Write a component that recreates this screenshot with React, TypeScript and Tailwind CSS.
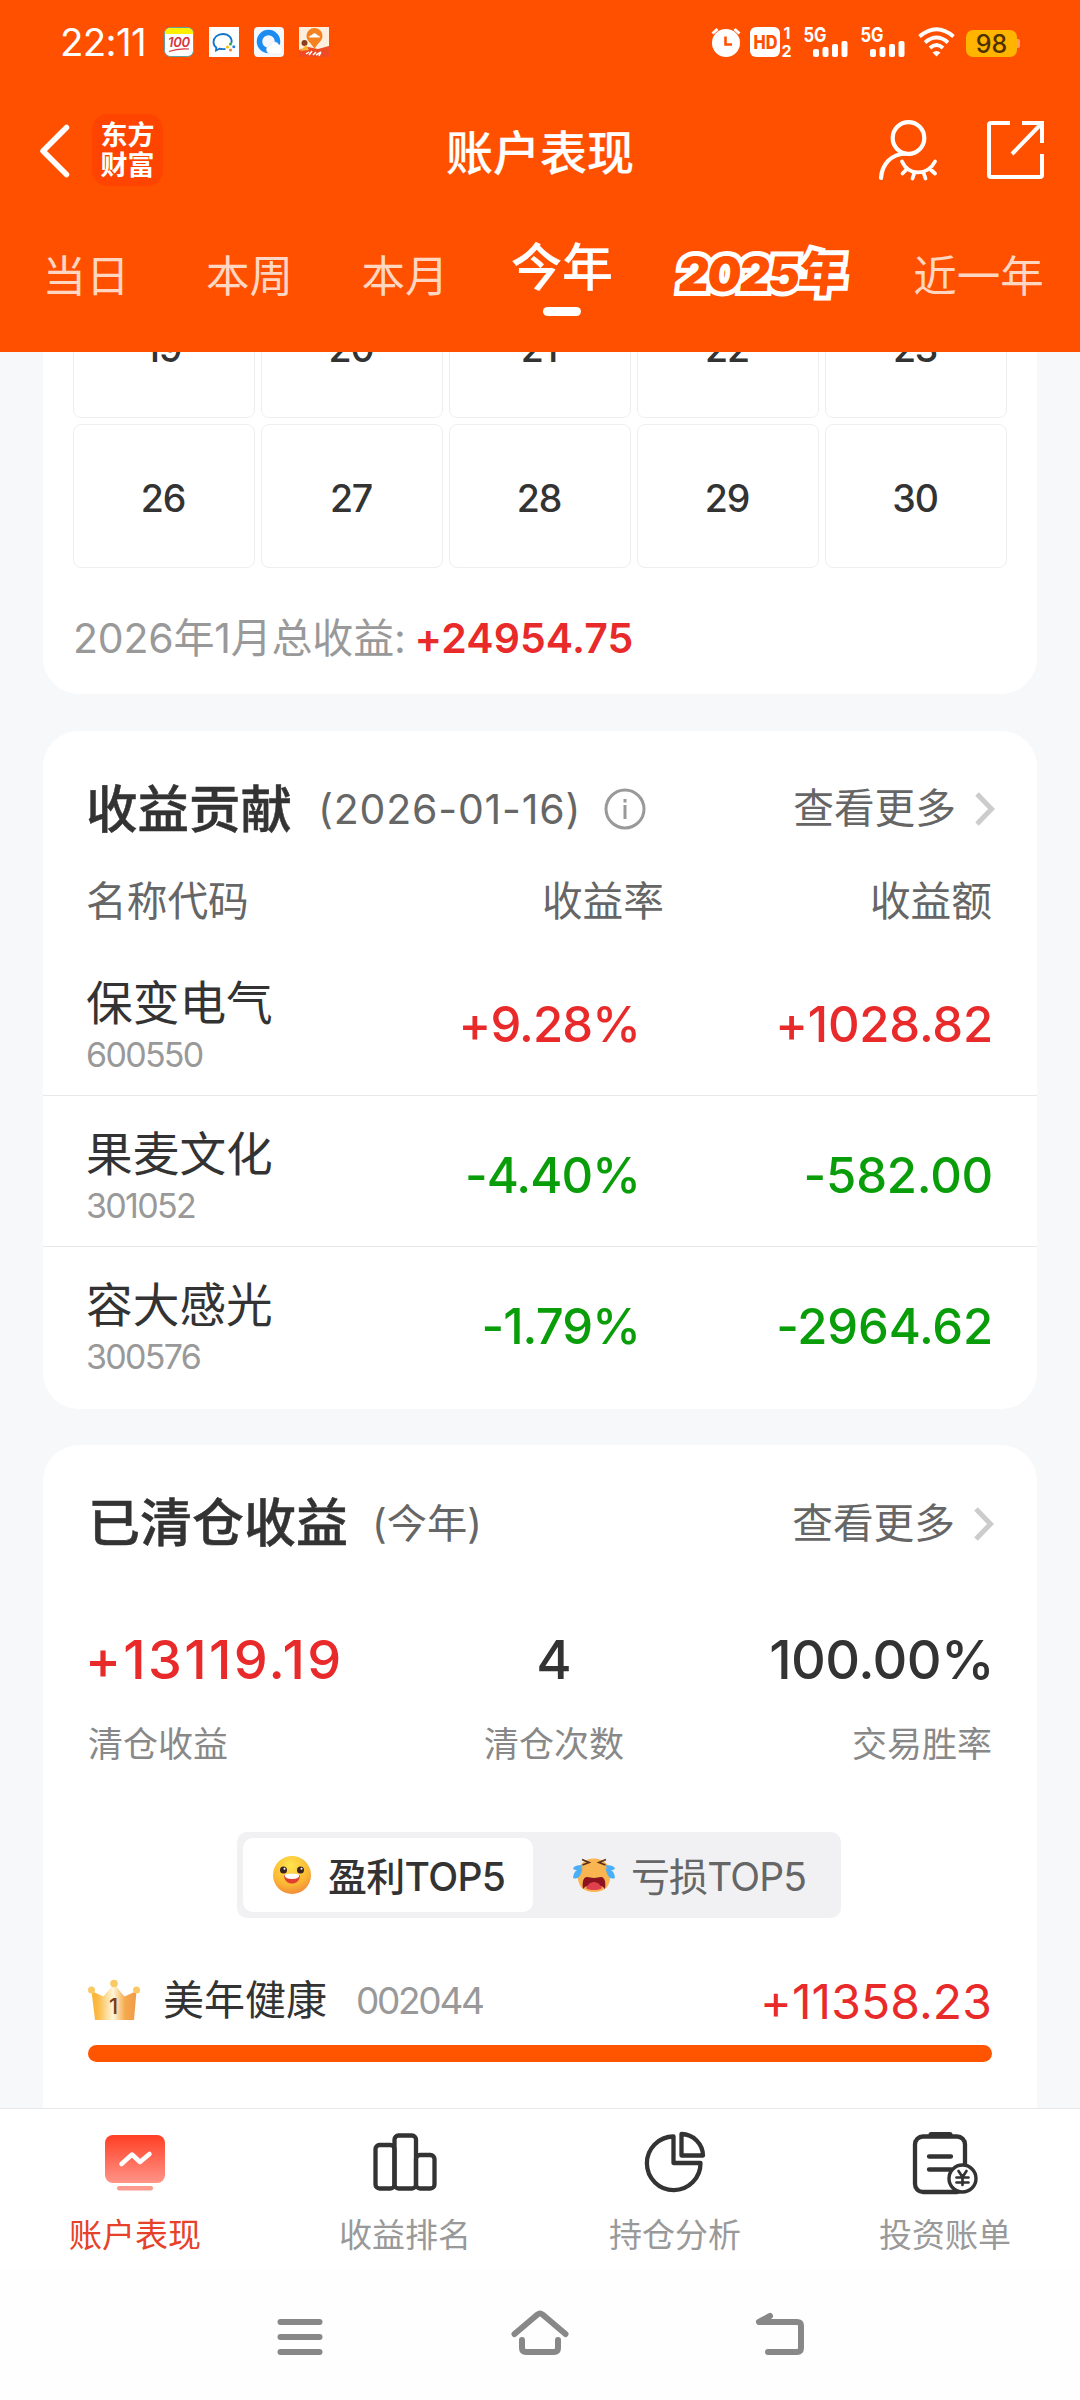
import React from 'react';
import clsx from 'clsx';

interface Contribution {
  name: string;
  code: string;
  rate: string;
  amount: string;
  up: boolean;
}

const contributions: Contribution[] = [
  { name: '保变电气', code: '600550', rate: '+9.28%', amount: '+1028.82', up: true },
  { name: '果麦文化', code: '301052', rate: '-4.40%', amount: '-582.00', up: false },
  { name: '容大感光', code: '300576', rate: '-1.79%', amount: '-2964.62', up: false },
];

const weeks = [
  ['19', '20', '21', '22', '23'],
  ['26', '27', '28', '29', '30'],
];

const Signal = () => (
  <svg className="overflow-visible" width="45" height="30" viewBox="0 0 45 30" fill="#fff">
    <text x="-0.500" y="15" fontSize="20" fontWeight="700" fontFamily="Inter" textLength="23" lengthAdjust="spacingAndGlyphs">5G</text>
    <rect x="9" y="22" width="6" height="8" rx="2" />
    <rect x="18.500" y="20" width="6" height="10" rx="2" />
    <rect x="28" y="17" width="6" height="13" rx="2" />
    <rect x="37.500" y="14" width="6" height="16" rx="2" />
  </svg>
);

const StatusBar = () => (
  <div className="flex h-[84px] items-center pl-[60px] pr-[60px] text-white">
    <span className="w-[104px] text-[38.500px] leading-[40px] tracking-[-0.700px]">22:11</span>
    <div className="flex gap-[15px]">
      <svg width="30" height="30" viewBox="0 0 30 30">
        <rect x="0.500" y="0.500" width="29" height="29" rx="6" fill="#fff" stroke="#5f9f9f" />
        <path d="M1 7V6a5 5 0 0 1 5-5h18a5 5 0 0 1 5 5v1z" fill="#fff000" />
        <text x="4" y="20" fontSize="13" fontStyle="italic" fontWeight="600" fontFamily="Inter" fill="#d8323c" textLength="22">100</text>
        <path d="M5 24.500Q14 21 25 22" stroke="#d8323c" strokeWidth="1.200" fill="none" />
      </svg>
      <svg width="30" height="30" viewBox="0 0 30 30">
        <rect width="30" height="30" fill="#fff" />
        <path d="M22.500 16c1-5-3-9-8.500-9s-9.500 3.500-9.500 8c0 2.500 1.200 4.300 2.800 5.500L7 23.500l3.500-1.800c1.500.5 4 .6 6 .1" stroke="#1473c8" strokeWidth="1.800" fill="none" />
        <circle cx="21.500" cy="17" r="1.500" fill="#2aab4f" />
        <circle cx="24.800" cy="19.800" r="1.500" fill="#2a7de0" />
        <circle cx="21.500" cy="23" r="1.500" fill="#f0803c" />
        <circle cx="18.500" cy="20" r="1.500" fill="#f5c400" />
      </svg>
      <svg width="30" height="30" viewBox="0 0 30 30">
        <rect width="30" height="30" rx="4" fill="#f4f7fc" />
        <circle cx="14.500" cy="14.500" r="9" fill="none" stroke="#1c8cf0" strokeWidth="5.500" />
        <path d="M17 27a4.500 4.500 0 0 1 0-9c1-4 6.500-4 7.500-.5 5 .5 5 9.500 0 9.500z" fill="#fff" stroke="#dde5ee" strokeWidth="0.500" />
      </svg>
      <svg width="30" height="30" viewBox="0 0 30 30">
        <rect width="30" height="30" fill="#fdeedd" />
        <path d="M0 23l9-3 10 2 11-3v11H0z" fill="#ee4a24" />
        <path d="M15.500 1a8 8 0 0 1 8 8c0 5-5 7-8 13-3-6-8-8-8-13a8 8 0 0 1 8-8z" fill="#f58220" />
        <path d="M10 10.500q0-2 2.500-2.200 3-4 6 0 2.500.2 2.500 2.200z" fill="#fff" />
        <circle cx="5.500" cy="16" r="3" fill="#8a3f1a" />
        <path d="M1 24l6-6 3 5z" fill="#ffb02e" />
        <path d="M7 27l3-2m0 3l3-4m1 4l3-3m0 3l5-3m-2 4l2-4" stroke="#fff" strokeWidth="1.500" />
      </svg>
    </div>
    <div className="ml-auto flex h-[30px] items-end">
      <svg width="30" height="30" viewBox="0 0 30 30">
        <circle cx="15" cy="16" r="14" fill="#fff" />
        <path d="M1.500 6.500L6.500 2M28.500 6.500l-5-4.500" stroke="#fff" strokeWidth="3" />
        <path d="M14.500 9.500v8h6.500" stroke="#ff5000" strokeWidth="2.600" fill="none" />
      </svg>
      <svg className="ml-[9px] overflow-visible" width="43" height="30" viewBox="0 0 43 30" fill="#fff">
        <rect width="30" height="30" rx="6" />
        <text x="3.500" y="22" fontSize="19" fontWeight="800" fontFamily="Inter" fill="#ff5000" textLength="24" lengthAdjust="spacingAndGlyphs">HD</text>
        <text x="33.500" y="12" fontSize="16" fontWeight="700" fontFamily="Inter">1</text>
        <text x="31.500" y="29.500" fontSize="16" fontWeight="700" fontFamily="Inter">2</text>
      </svg>
      <div className="ml-[11px]"><Signal /></div>
      <div className="ml-[12px]"><Signal /></div>
      <svg className="ml-[12px]" width="37" height="30" viewBox="0 0 37 30" fill="none" stroke="#fff" strokeWidth="3.800">
        <path d="M1.500 9.500q17-14.500 34 0" />
        <path d="M7 15.500q11.500-10 23 0" />
        <path d="M12 21q6.500-6 13 0" />
        <path d="M18.500 29.500l-4-4q4-3 8 0z" fill="#fff" stroke="none" />
      </svg>
      <div className="ml-[11px] flex items-center">
        <div className="h-[27px] w-[51px] rounded-[7px] bg-[#ffb400] text-center text-[25px] font-medium leading-[28px] text-[#4d3000]">98</div>
        <div className="h-[9px] w-[3px] rounded-r-[2px] bg-[#ff9a66]" />
      </div>
    </div>
  </div>
);

const TitleBar = () => (
  <div className="flex h-[132px] items-center pl-[39px] pr-[36px]">
    <svg className="mt-[2px]" width="31" height="54" viewBox="0 0 31 54" fill="none" stroke="#fff" strokeWidth="5.500" strokeLinecap="round" strokeLinejoin="round">
      <path d="M27.500 3.500L4 27l23.500 23.500" />
    </svg>
    <div className="ml-[22px] flex h-[72px] w-[71px] flex-col items-center justify-center rounded-[15px] bg-[#ff4400] pt-[2px] text-[27px] font-bold leading-[30px] text-white">
      <span>东方</span>
      <span>财富</span>
    </div>
    <h1 className="mt-[6px] flex-1 pl-[123px] text-center text-[47px] font-medium leading-[60px] text-white [-webkit-text-stroke:0.2px_white]">账户表现</h1>
    <svg className="ml-[83px] shrink-0" width="62" height="64" viewBox="0 0 62 64" fill="none" stroke="#fff" strokeWidth="4.200" strokeLinecap="round">
      <circle cx="31.500" cy="20" r="15.800" />
      <path d="M4 60C5 46 14 36.500 28 35.500" />
      <path d="M25 43.500c6.500 14.500 25.500 14.500 33 0M30 51l-4.500 4.500M37.500 54.500l-2 6M46.500 54.500l2 6M53 51l5 4.500" strokeWidth="3.800" />
    </svg>
    <svg className="ml-[47px] shrink-0" width="58" height="60" viewBox="0 0 58 60" fill="none" stroke="#fff" strokeWidth="4">
      <path d="M24 3H5Q3 3 3 5v50q0 2 2 2h49q2 0 2-2V34" />
      <path d="M36 3h20v20M56 3L26 34" />
    </svg>
  </div>
);

const PeriodTabs = () => (
  <div className="flex h-[136px] pt-[30px] text-[43.500px] leading-[60px] text-[#ffd6c2]">
    <span className="w-[172px] shrink-0 text-center">当日</span>
    <span className="w-[155px] shrink-0 text-center">本周</span>
    <span className="w-[156px] shrink-0 text-center">本月</span>
    <div className="-mt-[8px] flex w-[158px] shrink-0 flex-col items-center">
      <span className="text-[51px] font-medium text-white [-webkit-text-stroke:0.2px_white]">今年</span>
      <span className="mt-[9px] h-[9px] w-[38px] rounded-full bg-white" />
    </div>
    <div className="-mt-[2px] w-[236px] shrink-0 -skew-x-6 text-center text-[47.500px] font-black tracking-[-1.800px] text-[#ff5000] [-webkit-text-stroke:10px_white] [paint-order:stroke_fill]">2025年</div>
    <span className="w-[203px] shrink-0 text-center">近一年</span>
  </div>
);

const MoreLink = () => (
  <a className="ml-auto flex items-center text-[40.700px] leading-[50px] text-[#666]">
    查看更多
    <svg className="ml-[18px]" width="22" height="34" viewBox="0 0 22 34" fill="none" stroke="#ccc" strokeWidth="5">
      <path d="M3 2l14.500 15L3 32" />
    </svg>
  </a>
);

const CalendarCard = () => (
  <section className="h-[342px] overflow-hidden rounded-b-[36px] bg-white px-[30px]">
    <div className="-mt-[78px] flex flex-col gap-[6px]">
      {weeks.map((week) => (
        <div key={week[0]} className="grid grid-cols-5 gap-[6px]">
          {week.map((day) => (
            <div key={day} className="flex h-[144px] items-center justify-center rounded-[8px] border border-[#eee] pr-[2px] pt-[6px] text-[37.500px] font-medium leading-[40px] tracking-[-1.200px] text-[#333]">
              {day}
            </div>
          ))}
        </div>
      ))}
    </div>
    <p className="mt-[43px] flex items-center text-[41px] leading-[54px] text-[#999]">
      <span className="tracking-[-0.200px]">2026年1月总收益:</span>
      <span className="ml-[9px] font-semibold tracking-[0.100px] text-[#e82a2a]">+24954.75</span>
    </p>
  </section>
);

const ContributionCard = () => (
  <section className="mt-[37px] h-[678px] rounded-[36px] bg-white">
    <div className="flex h-[156px] items-center pl-[43px] pr-[41px]">
      <h2 className="text-[51.500px] font-medium leading-[60px] text-[#333] [-webkit-text-stroke:0.5px_#333]">收益贡献</h2>
      <span className="ml-[26px] text-[41px] leading-[50px] tracking-[0.800px] text-[#666]">(2026-01-16)</span>
      <svg className="ml-[23px]" width="42" height="42" viewBox="0 0 42 42" fill="none" stroke="#999" strokeWidth="3">
        <circle cx="21" cy="21" r="19" />
        <path d="M21 17v14M21 11v3.500" />
      </svg>
      <MoreLink />
    </div>
    <div className="-mt-[15px] flex h-[60px] items-center pl-[43px] pr-[45px] text-[40.700px] leading-[50px] text-[#666]">
      <span className="w-[300px]">名称代码</span>
      <span className="w-[278px] text-right">收益率</span>
      <span className="flex-1 text-right">收益额</span>
    </div>
    <div className="mt-[13px]">
      {contributions.map((item, i) => (
        <div key={item.code} className={clsx('flex h-[151px] items-center pl-[43px] pr-[44px]', i < 2 && 'border-b border-[#e8e8e8]')}>
          <div className="w-[250px] pt-[9px]">
            <p className="text-[46.700px] leading-[60px] text-[#333]">{item.name}</p>
            <p className="text-[34px] leading-[44px] tracking-[-1.700px] text-[#999]">{item.code}</p>
          </div>
          <div className={clsx('flex flex-1 pt-[9px] text-[49px] font-medium leading-[60px]', item.up ? 'text-[#e82a2a]' : 'text-[#0a9d0a]')}>
            <span className="w-[304px] text-right tracking-[-0.900px]">{item.rate}</span>
            <span className="flex-1 text-right tracking-[-0.200px]">{item.amount}</span>
          </div>
        </div>
      ))}
    </div>
  </section>
);

const HappyFace = () => (
  <svg width="40" height="40" viewBox="0 0 40 40">
    <defs>
      <radialGradient id="happy" cx="0.450" cy="0.250" r="0.850">
        <stop offset="0" stopColor="#ffe44d" />
        <stop offset="0.600" stopColor="#fbb733" />
        <stop offset="1" stopColor="#ee7a3c" />
      </radialGradient>
    </defs>
    <circle cx="20" cy="20" r="19" fill="url(#happy)" />
    <circle cx="11.500" cy="15" r="3.500" fill="#3a2420" />
    <circle cx="28.500" cy="15" r="3.500" fill="#3a2420" />
    <circle cx="12.500" cy="13.800" r="1" fill="#fff" />
    <circle cx="29.500" cy="13.800" r="1" fill="#fff" />
    <path d="M12 20q8.500-2.500 16 0c0 6-4 8.500-8 8.500s-8-2.500-8-8.500z" fill="#e2402f" />
    <path d="M12.500 19.500q7.500-2 15 0 0 4.500-7.500 4.500t-7.500-4.500z" fill="#fff" />
  </svg>
);

const CryFace = () => (
  <svg width="44" height="36" viewBox="0 0 44 36">
    <path d="M22 1.500c9.500 0 16.500 6.500 16.500 16 0 6-2 11-4.500 13.500-3 2.500-7 4-12 4s-9-1.500-12-4c-2.500-2.500-4.500-7.500-4.500-13.500 0-9.500 7-16 16.500-16z" fill="#f8b550" />
    <path d="M11 32c-1-6 0-12 4-12 3 0 4 1 7 1s4-1 7-1c4 0 5 6 4 12q-2-3-5-3H16q-3 0-5 3z" fill="#8c1420" />
    <path d="M14 31q3-6 8-6t8 6q-2 2-8 2t-8-2z" fill="#e0404e" />
    <path d="M10 2.500l7 3-6.500 2.500M34 2.500l-7 3 6.500 2.500" stroke="#5e3020" strokeWidth="1.800" fill="none" />
    <path d="M11 8.500q-9-1-10 3.500 5 3 10-3.500zM10.500 11q-9 1-9.500 10 7 3 9.500-10zM33 8.500q9-1 10 3.500-5 3-10-3.500zM33.500 11q9 1 9.500 10-7 3-9.500-10z" fill="#4aaef7" />
  </svg>
);

const Crown = () => (
  <svg width="52" height="42" viewBox="0 0 52 42">
    <defs>
      <linearGradient id="crown">
        <stop offset="0" stopColor="#f9b233" />
        <stop offset="0.150" stopColor="#fbbb48" />
        <stop offset="0.480" stopColor="#fff6d8" />
        <stop offset="0.750" stopColor="#f5a94c" />
        <stop offset="1" stopColor="#f19a4a" />
      </linearGradient>
    </defs>
    <path d="M3.500 12l12 5.500L26 5l10.500 12.500 12-5.500L46 41H7z" fill="url(#crown)" />
    <circle cx="3.500" cy="11" r="3.500" fill="#fbc964" />
    <circle cx="26" cy="4.500" r="3.800" fill="#fbc964" />
    <circle cx="48.500" cy="11" r="3.500" fill="#fbc964" />
    <text x="25.500" y="34.500" fontSize="22" fontWeight="500" fontFamily="Inter" fill="#7a3b1c" textAnchor="middle">1</text>
  </svg>
);

const ClearedCard = () => (
  <section className="mt-[36px] h-[663px] overflow-hidden rounded-t-[36px] bg-white pl-[45px] pr-[45px]">
    <div className="-mr-[3px] flex h-[156px] items-center pt-[1px]">
      <h2 className="text-[52px] font-medium leading-[60px] text-[#333] [-webkit-text-stroke:0.5px_#333]">已清仓收益</h2>
      <span className="ml-[24px] text-[40.300px] leading-[50px] text-[#666]">(今年)</span>
      <MoreLink />
    </div>
    <div className="mt-[26px] flex justify-between">
      <div className="w-[320px]">
        <p className="-ml-[3px] text-[54px] font-medium leading-[66px] tracking-[2.300px] text-[#e82a2a]">+13119.19</p>
        <p className="mt-[25px] text-[35px] leading-[52px] text-[#888]">清仓收益</p>
      </div>
      <div className="w-[290px] pl-[2px] text-center">
        <p className="text-[54px] font-medium leading-[66px] text-[#333]">4</p>
        <p className="mt-[25px] text-[35px] leading-[52px] text-[#888]">清仓次数</p>
      </div>
      <div className="w-[294px] text-right">
        <p className="-mr-[2px] text-[54px] font-medium leading-[66px] tracking-[-0.600px] text-[#333]">100.00%</p>
        <p className="mt-[25px] text-[35px] leading-[52px] text-[#888]">交易胜率</p>
      </div>
    </div>
    <div className="ml-[149px] mt-[62px] flex h-[86px] w-[604px] items-center rounded-[10px] bg-[#f1f1f4] p-[6px] text-[39px] leading-[50px]">
      <div className="flex h-[74px] w-[290px] items-center rounded-[10px] bg-white pl-[29px] text-[#333]">
        <HappyFace />
        <span className="ml-[16px] pt-[3px] font-medium tracking-[-0.700px]">盈利TOP5</span>
      </div>
      <div className="flex flex-1 items-center pl-[39px] text-[#666]">
        <CryFace />
        <span className="ml-[15px] pt-[3px] tracking-[-0.900px]">亏损TOP5</span>
      </div>
    </div>
    <div className="mt-[52px] flex h-[60px] items-center">
      <Crown />
      <span className="ml-[23px] text-[41px] leading-[50px] text-[#333]">美年健康</span>
      <span className="ml-[29px] pt-[1px] text-[37px] leading-[50px] tracking-[-2.300px] text-[#999]">002044</span>
      <span className="ml-auto pt-[4px] text-[48px] leading-[56px] tracking-[0.100px] text-[#e82a2a]">+11358.23</span>
    </div>
    <div className="mt-[15px] h-[17px] rounded-full bg-[#ff5500]" />
  </section>
);

const navItems = [
  {
    label: '账户表现',
    icon: (
      <svg width="66" height="64" viewBox="0 0 66 64">
        <defs>
          <linearGradient id="screen" x2="0" y2="1">
            <stop offset="0" stopColor="#ff3f24" />
            <stop offset="1" stopColor="#ff9488" />
          </linearGradient>
        </defs>
        <rect x="3" y="4" width="60" height="48" rx="8" fill="url(#screen)" />
        <path d="M19.500 33l10.500-9.500 8 7.500L47.500 23" fill="none" stroke="#fff" strokeWidth="4.500" strokeLinecap="round" strokeLinejoin="round" />
        <rect x="15" y="55" width="36" height="4.500" rx="2.200" fill="#fb9a8e" />
      </svg>
    ),
  },
  {
    label: '收益排名',
    icon: (
      <svg width="66" height="64" viewBox="0 0 66 64" fill="none" stroke="#333" strokeWidth="4.300">
        <rect x="3.500" y="14" width="19" height="43.500" rx="4" />
        <rect x="22.500" y="4.500" width="21.500" height="53" rx="4" />
        <rect x="44" y="24" width="18.500" height="33.500" rx="4" />
      </svg>
    ),
  },
  {
    label: '持仓分析',
    icon: (
      <svg width="66" height="64" viewBox="0 0 66 64" fill="none" stroke="#333" strokeWidth="4.300" strokeLinejoin="round">
        <path d="M31.500 5.500A26.800 26.800 0 1 0 58.500 32H31.500z" />
        <path d="M39.500 3v21.500H61A22 22 0 0 0 39.500 3z" />
      </svg>
    ),
  },
  {
    label: '投资账单',
    icon: (
      <svg width="66" height="64" viewBox="0 0 66 64" fill="none" stroke="#333" strokeWidth="4.300" strokeLinecap="round">
        <rect x="3" y="5.500" width="50" height="55.500" rx="8" />
        <path d="M19 3.500h19" strokeWidth="5" />
        <path d="M17 25.500h22M17 38.500h22" />
        <circle cx="50.500" cy="47.500" r="13.500" fill="#fff" strokeWidth="3.400" />
        <path d="M46.500 40l4 6 4-6M50.500 46v8M44.500 46.500h12M44.500 51.500h12" strokeWidth="2.700" />
      </svg>
    ),
  },
];

const BottomNav = () => (
  <nav className="flex h-[162px] border-t border-[#e8e8e8] bg-white pt-[22px]">
    {navItems.map((item, i) => (
      <div key={item.label} className="flex w-[270px] flex-col items-center">
        {item.icon}
        <span className={clsx('mt-[18px] text-[33px] leading-[44px]', i === 0 ? 'text-[#e8412a]' : 'text-[#999]')}>{item.label}</span>
      </div>
    ))}
  </nav>
);

const SystemNav = () => (
  <div className="flex h-[130px] justify-center gap-[180px] bg-[#fefefe] pt-[38px]">
    <svg width="60" height="50" viewBox="0 0 60 50" stroke="#888" strokeWidth="6" strokeLinecap="round">
      <path d="M10.500 14h39M10.500 29h39M10.500 44h39" />
    </svg>
    <svg width="60" height="50" viewBox="0 0 60 50" fill="none" stroke="#888" strokeWidth="6" strokeLinecap="round" strokeLinejoin="round">
      <path d="M4.500 26L27.500 6.500Q30 4.500 32.500 6.500L55.500 26" />
      <path d="M12 32v8q0 4 4 4h28q4 0 4-4v-8" />
    </svg>
    <svg width="60" height="50" viewBox="0 0 60 50" fill="none" stroke="#888" strokeWidth="6" strokeLinecap="round" strokeLinejoin="round">
      <path d="M20 8L9 14h38q4 0 4 4v22q0 4-4 4H18" />
    </svg>
  </div>
);

const App: React.FC = () => {
  return (
    <div className="flex h-[2400px] w-[1080px] flex-col overflow-hidden whitespace-nowrap bg-[#f7f8fa] font-['Inter','Noto_Sans_CJK_SC',sans-serif]">
      <header className="h-[352px] shrink-0 bg-[#ff5000]">
        <StatusBar />
        <TitleBar />
        <PeriodTabs />
      </header>
      <main className="h-[1756px] overflow-hidden px-[43px]">
        <CalendarCard />
        <ContributionCard />
        <ClearedCard />
      </main>
      <BottomNav />
      <SystemNav />
    </div>
  );
};

export default App;
